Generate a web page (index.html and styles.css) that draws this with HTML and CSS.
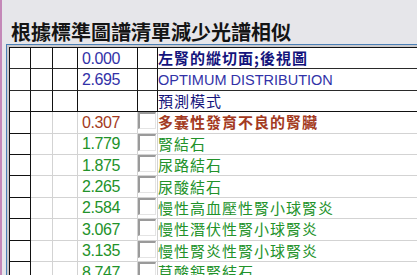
FILE: index.html
```html
<!DOCTYPE html>
<html>
<head>
<meta charset="utf-8">
<link rel="stylesheet" href="styles.css">
</head>
<body>
<div class="page">
  <h1 class="title">根據標準圖譜清單減少光譜相似</h1>
  <div class="frame">
    <div class="inner">
      <table class="grid">
        <colgroup>
          <col class="c1"><col class="c2"><col class="c3"><col class="c4"><col class="c5"><col class="c6">
        </colgroup>
        <tbody>
          <tr class="top">
            <td></td><td></td><td></td><td class="num blue">0.000</td><td></td><td class="txt navy bold">左腎的縱切面;後視圖</td>
          </tr>
          <tr class="top">
            <td></td><td></td><td></td><td class="num blue">2.695</td><td></td><td class="txt blue latin">OPTIMUM DISTRIBUTION</td>
          </tr>
          <tr class="top last">
            <td></td><td></td><td></td><td></td><td></td><td class="txt navy">預測模式</td>
          </tr>
          <tr>
            <td></td><td></td><td></td><td class="num red">0.307</td><td class="cb"><span class="box"></span></td><td class="txt red bold">多囊性發育不良的腎臟</td>
          </tr>
          <tr>
            <td></td><td></td><td></td><td class="num green">1.779</td><td class="cb"><span class="box"></span></td><td class="txt green">腎結石</td>
          </tr>
          <tr>
            <td></td><td></td><td></td><td class="num green">1.875</td><td class="cb"><span class="box"></span></td><td class="txt green">尿路結石</td>
          </tr>
          <tr>
            <td></td><td></td><td></td><td class="num green">2.265</td><td class="cb"><span class="box"></span></td><td class="txt green">尿酸結石</td>
          </tr>
          <tr>
            <td></td><td></td><td></td><td class="num green">2.584</td><td class="cb"><span class="box"></span></td><td class="txt green">慢性高血壓性腎小球腎炎</td>
          </tr>
          <tr>
            <td></td><td></td><td></td><td class="num green">3.067</td><td class="cb"><span class="box"></span></td><td class="txt green">慢性潛伏性腎小球腎炎</td>
          </tr>
          <tr>
            <td></td><td></td><td></td><td class="num green">3.135</td><td class="cb"><span class="box"></span></td><td class="txt green">慢性腎炎性腎小球腎炎</td>
          </tr>
          <tr>
            <td></td><td></td><td></td><td class="num green">8.747</td><td class="cb"><span class="box"></span></td><td class="txt green">草酸鈣腎結石</td>
          </tr>
        </tbody>
      </table>
    </div>
  </div>
</div>
</body>
</html>
```
FILE: styles.css
```css
html, body {
  margin: 0;
  padding: 0;
  background: #e6e6ea;
  overflow: hidden;
}
body {
  width: 417px;
  height: 275px;
  border-left: 2px solid #c488b8;
  box-sizing: border-box;
}
.page {
  padding-top: 22px;
}
.title {
  margin: 0 0 2px 9px;
  height: 20px;
  font: bold 20px/20px "Noto Sans CJK TC", "Noto Sans CJK SC", sans-serif;
  color: #141414;
  white-space: nowrap;
}
.frame {
  margin-left: 4px;
  border-top: 1px solid #4a7fb6;
  border-left: 1px solid #4a7fb6;
  width: 600px;
}
.inner {
  border-top: 2px solid #c9c9cc;
  border-left: 2px solid #c9c9cc;
}
.grid {
  table-layout: fixed;
  border-collapse: separate;
  border-spacing: 0;
  background: #fff;
  border-top: 1px solid #111;
  border-left: 1px solid #111;
  width: 597px;
}
col.c1 { width: 21px; }
col.c2 { width: 22px; }
col.c3 { width: 25px; }
col.c4 { width: 60px; }
col.c5 { width: 20px; }
col.c6 { width: 449px; }
.grid td {
  box-sizing: border-box;
  height: 21.4px;
  padding: 0;
  border-right: 1px solid #d3d3d3;
  border-bottom: 1px solid #d3d3d3;
  white-space: nowrap;
  vertical-align: middle;
  font-family: "Liberation Sans", "Noto Sans CJK TC", sans-serif;
  font-size: 15px;
  line-height: 16px;
  font-weight: normal;
}
.grid td:first-child {
  border-right-color: #111;
  border-bottom-color: #111;
}
.grid tr.top td {
  border-right-color: #111;
  border-bottom-color: #2a2a2a;
}
.grid tr.top.last td {
  border-bottom-color: #111;
}
.grid td.num {
  padding-left: 4px;
  font-size: 16px;
  letter-spacing: -0.4px;
  padding-top: 1px;
}
.grid td.txt {
  font-family: "Noto Sans CJK TC", "Noto Sans CJK SC", sans-serif;
  font-size: 15px;
  letter-spacing: 1px;
  line-height: 16px;
}
.grid td.latin {
  font-family: "Liberation Sans", sans-serif;
  font-size: 14.5px;
  letter-spacing: 0;
  padding-top: 1px;
}
.grid td.bold { font-weight: bold; }
.blue { color: #3232a8; }
.navy { color: #14147c; }
.red { color: #a33a22; }
.green { color: #22922a; }
.grid td.cb {
  vertical-align: top;
}
.box {
  display: block;
  box-sizing: border-box;
  width: 18px;
  height: 17px;
  background: #fff;
  border-top: 2px solid #9a9a9a;
  border-left: 2px solid #9a9a9a;
  border-right: 1px solid #e4e4e4;
  border-bottom: 1px solid #e4e4e4;
}
```
